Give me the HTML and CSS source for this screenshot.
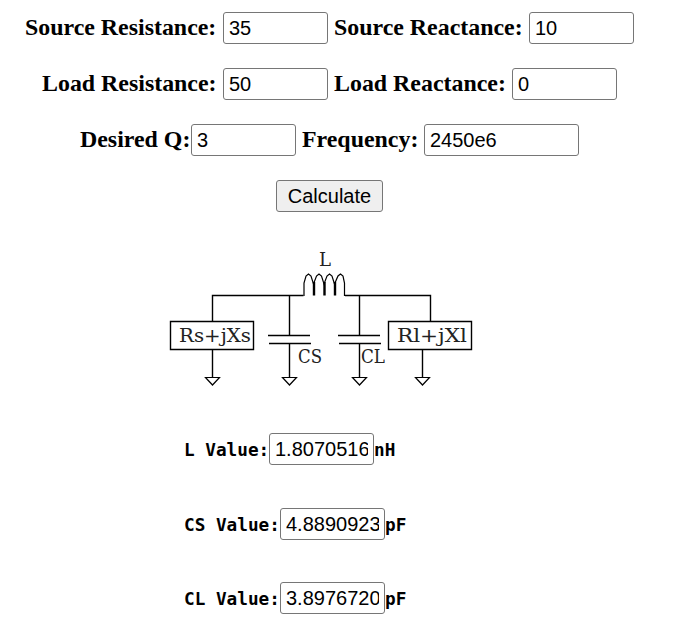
FILE: index.html
```html
<!DOCTYPE html>
<html lang="en">
<head>
<meta charset="utf-8">
<title>Pi Matching Network Calculator</title>
<link rel="stylesheet" href="styles.css">
</head>
<body>
<form class="calculator">
  <div class="row source"><label class="w-sr" for="rs">Source Resistance:</label><input id="rs" value="35"><label class="next w-sx" for="xs">Source Reactance:</label><input id="xs" value="10"></div>
  <div class="row load"><label class="w-lr" for="rl">Load Resistance:</label><input id="rl" value="50"><label class="next w-lx" for="xl">Load Reactance:</label><input id="xl" value="0"></div>
  <div class="row quality"><label class="w-q" for="q">Desired Q:</label><input id="q" value="3"><label class="next w-f" for="freq">Frequency:</label><input class="wide" id="freq" value="2450e6"></div>
  <button type="button">Calculate</button>
  <svg class="circuit" width="310" height="150" viewBox="165 243 310 150">
    <g class="wire">
      <path d="M212.5 322V295.500H303.500M289.500 295V336M268 335.500H310M269 343.500H311M289.500 343V377M212.500 349V377M345 295.500H430.500V322M359.500 295V336M338 335.500H380M339 343.500H381M359.500 343V377M422.500 349V377"/>
      <path d="M170.500 321.500H253.500V349.500H170.500ZM388.500 321.500H471.500V349.500H388.500Z"/>
      <path class="ground" d="M205.500 377.500H219.500L212.500 385ZM282.500 377.500H296.500L289.500 385ZM352.500 377.500H366.500L359.500 385ZM415.500 377.500H429.500L422.500 385Z"/>
      <path class="coil" d="M304 296V283L306 276L308.500 274L311 276L313.500 284L316.500 276L319 274L321.500 276L324 284L327 276L329.500 274L332 276L334.500 284L338 276L340.500 274L343 276L344.500 283V296"/>
      <path class="turns" d="M314 282V295.500M324.500 282V295.500M335 282V295.500"/>
    </g>
    <g class="names">
      <text x="319" y="265.500" textLength="12" lengthAdjust="spacingAndGlyphs">L</text>
      <text x="179" y="342" textLength="72" lengthAdjust="spacingAndGlyphs">Rs+jXs</text>
      <text x="298" y="363" textLength="24" lengthAdjust="spacingAndGlyphs">CS</text>
      <text x="361" y="363" textLength="24" lengthAdjust="spacingAndGlyphs">CL</text>
      <text x="397" y="342" textLength="70" lengthAdjust="spacingAndGlyphs">Rl+jXl</text>
    </g>
  </svg>
  <div class="result first"><label class="w-l" for="l">L Value:</label><input id="l" value="1.807051612"><span>nH</span></div>
  <div class="result"><label class="w-c" for="cs">CS Value:</label><input id="cs" value="4.8890923"><span>pF</span></div>
  <div class="result last"><label class="w-c" for="cl">CL Value:</label><input id="cl" value="3.8976720"><span>pF</span></div>
</form>
</body>
</html>
```
FILE: styles.css
```css
* { box-sizing: border-box; }
body { margin: 0; background: #fff; color: #000; }
.calculator { width: 674px; height: 632px; padding-top: 12px; overflow: hidden; }
.row { display: flex; height: 32px; margin-bottom: 24px; font: bold 23.9px/30px "Liberation Serif", serif; white-space: nowrap; }
.source { padding-left: 25px; }
.load { padding-left: 42px; }
.quality { padding-left: 80px; }
.next { margin-left: 6px; }
.w-sr { width: 198px; }
.w-sx { width: 195px; }
.w-lr { width: 181px; }
.w-lx { width: 178px; }
.w-q { width: 111px; }
.w-f { width: 122px; }
input { width: 105px; height: 32px; padding: 1px 5px; border: 1px solid #767676; border-radius: 3px; background: #fff; color: #000; font: 20px "Liberation Sans", sans-serif; }
.wide { width: 155px; }
button { display: block; width: 107px; height: 32px; margin: 0 0 0 276px; padding: 0; border: 1px solid #767676; border-radius: 3px; background: #efefef; color: #000; font: 20px "Liberation Sans", sans-serif; }
.circuit { display: block; margin: 31px 0 0 165px; }
.wire { fill: none; stroke: #000; stroke-width: 1.4; }
.ground { stroke-width: 1.2; }
.coil { stroke-width: 1.2; }
.turns { stroke-width: 2.4; }
.names { fill: #222; font: 18.5px "DejaVu Serif", serif; }
.result { display: flex; height: 32px; margin: 0 0 43px 184px; font: bold 17.7px/34px "DejaVu Sans Mono", monospace; white-space: nowrap; }
.first { margin-top: 40px; }
.last { margin-top: -1px; }
.w-l { width: 85px; }
.w-c { width: 96px; }
```
